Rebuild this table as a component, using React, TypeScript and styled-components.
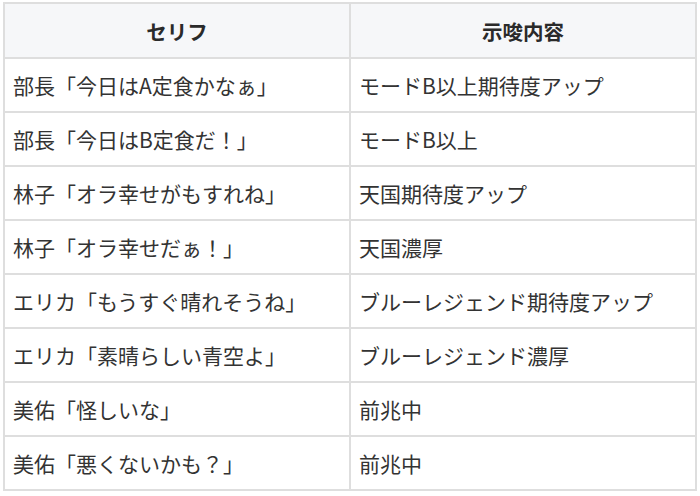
import React from "react";
import styled, { createGlobalStyle } from "styled-components";

const rows: [string, string][] = [
  ["部長「今日はA定食かなぁ」", "モードB以上期待度アップ"],
  ["部長「今日はB定食だ！」", "モードB以上"],
  ["林子「オラ幸せがもすれね」", "天国期待度アップ"],
  ["林子「オラ幸せだぁ！」", "天国濃厚"],
  ["エリカ「もうすぐ晴れそうね」", "ブルーレジェンド期待度アップ"],
  ["エリカ「素晴らしい青空よ」", "ブルーレジェンド濃厚"],
  ["美佑「怪しいな」", "前兆中"],
  ["美佑「悪くないかも？」", "前兆中"],
];

const GlobalStyle = createGlobalStyle`
  html, body {
    margin: 0;
    padding: 0;
    background: #ffffff;
  }
  body {
    font-family: "Noto Sans CJK JP", "Noto Sans", sans-serif;
    color: #333;
  }
`;

const Wrapper = styled.div`
  padding: 2px 3px 0 3px;
`;

const Table = styled.table`
  width: 100%;
  border-collapse: collapse;
  table-layout: fixed;
  border: 2px solid #dedede;
`;

const HeadCell = styled.th`
  height: 53px;
  padding: 0 8px;
  background: #f6f7f9;
  border: 2px solid #dedede;
  font-size: 20.5px;
  font-weight: 700;
  color: #2a2a2a;
  text-align: center;
  vertical-align: middle;
`;

const Cell = styled.td`
  height: 52px;
  padding: 0 8px;
  border: 2px solid #dedede;
  font-size: 21px;
  font-weight: 400;
  color: #333;
  text-align: left;
  vertical-align: middle;
  white-space: nowrap;
`;

export default function App() {
  return (
    <>
      <GlobalStyle />
      <Wrapper>
        <Table>
          <thead>
            <tr>
              <HeadCell>セリフ</HeadCell>
              <HeadCell>示唆内容</HeadCell>
            </tr>
          </thead>
          <tbody>
            {rows.map(([line, hint], i) => (
              <tr key={i}>
                <Cell>{line}</Cell>
                <Cell>{hint}</Cell>
              </tr>
            ))}
          </tbody>
        </Table>
      </Wrapper>
    </>
  );
}
